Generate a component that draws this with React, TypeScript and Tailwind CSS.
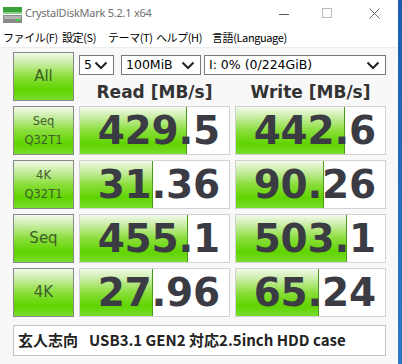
import React from "react";

const GREEN =
  "bg-[linear-gradient(to_bottom,#f2f9ec_0%,#c8eda2_22%,#8ade3c_50%,#60d400_78%,#78dc2c_100%)]";

function Chevron() {
  return (
    <svg width="14" height="9" viewBox="0 0 14 9" className="shrink-0">
      <path d="M1.5 1.5 L7 7 L12.5 1.5" fill="none" stroke="#222" strokeWidth="2" />
    </svg>
  );
}

function Select({ text, w }: { text: string; w: string }) {
  return (
    <div
      className={`${w} h-[20px] bg-white border border-[#7a7a7a] flex items-center justify-between pl-[4px] pr-[5px] text-[12.5px] text-black font-['DejaVu_Sans',sans-serif]`}
    >
      <span>{text}</span>
      <Chevron />
    </div>
  );
}

function Label({ lines, big }: { lines: string[]; big?: boolean }) {
  return (
    <div
      className={`${GREEN} border border-[#888] flex flex-col items-center justify-center text-[#3f5e2a] font-['DejaVu_Sans',sans-serif] ${
        big ? "text-[15px]" : "text-[11.5px] leading-[19px]"
      }`}
    >
      {lines.map((l) => (
        <span key={l}>{l}</span>
      ))}
    </div>
  );
}

function Val({ v, fill }: { v: string; fill: number }) {
  return (
    <div className="relative border border-[#d2d2d2] bg-white overflow-hidden">
      <div
        className={`absolute left-0 top-0 bottom-0 ${GREEN} border-r border-[#4c9a1c]`}
        style={{ width: fill }}
      />
      <div className="relative h-full flex items-center justify-end pr-[9px] pt-[1px] font-bold text-[39px] text-[#3b3b43] font-['DejaVu_Sans',sans-serif] tracking-[-0.2px]">
        {v}
      </div>
    </div>
  );
}

function AppIcon() {
  return (
    <svg width="19" height="16" viewBox="0 0 19 16">
      <rect x="0" y="0" width="19" height="5" fill="#3aa33a" />
      <rect x="0" y="5" width="19" height="2" fill="#8fd08f" />
      <rect x="0" y="8" width="19" height="8" fill="#8a8a8a" />
      <rect x="1" y="9" width="17" height="3" fill="#b5b5b5" />
      <rect x="13" y="12" width="4" height="2" fill="#3ad13a" />
    </svg>
  );
}

export default function App() {
  const rows = [
    { lines: ["Seq", "Q32T1"], r: "429.5", rf: 107, w: "442.6", wf: 109 },
    { lines: ["4K", "Q32T1"], r: "31.36", rf: 73, w: "90.26", wf: 88 },
    { lines: ["Seq"], r: "455.1", rf: 108, w: "503.1", wf: 111, big: true },
    { lines: ["4K"], r: "27.96", rf: 73, w: "65.24", wf: 83, big: true },
  ];
  return (
    <div className="w-[402px] h-[364px] flex overflow-hidden">
      <div className="w-[398px] h-full flex flex-col bg-white">
        {/* title bar */}
        <div className="h-[27px] flex items-center shrink-0">
          <div className="ml-[3px] mt-[2px]">
            <AppIcon />
          </div>
          <span className="ml-[3px] text-[11px] tracking-[-0.25px] text-[#6e6e6e] font-['Noto_Sans',sans-serif]">
            CrystalDiskMark 5.2.1 x64
          </span>
          <div className="ml-auto flex items-center">
            <svg width="12" height="12" viewBox="0 0 12 12" className="mr-[31px]">
              <line x1="0" y1="6.5" x2="10" y2="6.5" stroke="#555" strokeWidth="1" />
            </svg>
            <svg width="12" height="12" viewBox="0 0 12 12" className="mr-[35px]">
              <rect x="0.5" y="0.5" width="9" height="9" fill="none" stroke="#bbb" strokeWidth="1" />
            </svg>
            <svg width="12" height="12" viewBox="0 0 12 12" className="mr-[17px]">
              <path d="M0.5 0.5 L10.5 10.5 M10.5 0.5 L0.5 10.5" stroke="#666" strokeWidth="1" />
            </svg>
          </div>
        </div>
        {/* menu */}
        <div className="h-[20px] flex items-center pl-[3px] text-[11px] tracking-[-0.4px] text-black font-['Noto_Sans_CJK_JP',sans-serif] shrink-0 whitespace-nowrap">
          <span className="w-[59px]">ファイル(F)</span>
          <span className="w-[46px]">設定(S)</span>
          <span className="w-[48px]">テーマ(T)</span>
          <span className="w-[56px]">ヘルプ(H)</span>
          <span>言語(Language)</span>
        </div>
        {/* content */}
        <div className="flex-1 bg-[#f8f8f8] border-t border-[#ececec] pt-[4px] pl-[13px]">
          <div className="grid grid-cols-[61px_151px_151px] auto-rows-[49px] gap-[5px]">
            <Label lines={["All"]} big />
            <div className="col-span-2 flex flex-col">
              <div className="flex items-center mt-[3px]">
                <Select text="5" w="w-[35px]" />
                <div className="w-[7px]" />
                <Select text="100MiB" w="w-[80px]" />
                <div className="w-[3px]" />
                <Select text="I: 0% (0/224GiB)" w="w-[182px]" />
              </div>
              <div className="grid grid-cols-[151px_151px] gap-[5px] mt-[5px] font-bold text-[17px] text-[#333] font-['DejaVu_Sans',sans-serif]">
                <div className="text-center">Read [MB/s]</div>
                <div className="text-center">Write [MB/s]</div>
              </div>
            </div>
            {rows.map((r) => (
              <React.Fragment key={r.r}>
                <Label lines={r.lines} big={r.big} />
                <Val v={r.r} fill={r.rf} />
                <Val v={r.w} fill={r.wf} />
              </React.Fragment>
            ))}
          </div>
          <div className="mt-[8px] w-[373px] h-[31px] bg-white border border-[#c4c4c4] flex items-center pl-[4px] font-bold text-[15px] text-[#222] font-['Noto_Sans_CJK_JP',sans-serif]">
            <span>玄人志向</span>
            <span className="ml-[11px]">USB3.1 GEN2 対応2.5inch HDD case</span>
          </div>
        </div>
      </div>
      <div className="w-[4px] h-full bg-[linear-gradient(to_bottom,#1b5fae,#2a78cc)]" />
    </div>
  );
}
